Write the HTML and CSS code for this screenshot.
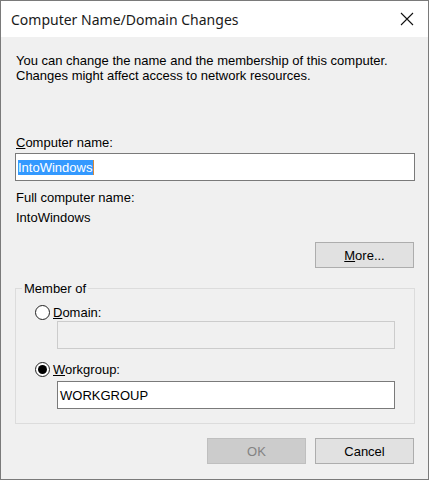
FILE: index.html
```html
<!DOCTYPE html>
<html>
<head>
  <meta charset="utf-8">
  <title>Computer Name/Domain Changes</title>
  <link rel="stylesheet" href="styles.css">
</head>
<body>
  <div class="window">
    <div class="titlebar">
      <span class="title">Computer Name/Domain Changes</span>
      <svg class="close" width="14" height="14" viewBox="0 0 14 14">
        <path d="M1 1 L13 13 M13 1 L1 13" stroke="#111" stroke-width="1.1" fill="none"/>
      </svg>
    </div>

    <div class="content">
      <p class="intro">You can change the name and the membership of this computer.<br>Changes might affect access to network resources.</p>

      <div class="label name-label"><u>C</u>omputer name:</div>
      <div class="textbox"><span class="sel">IntoWindows</span></div>

      <div class="label full-label">Full computer name:</div>
      <div class="label">IntoWindows</div>

      <div class="more-row">
        <button class="btn"><u>M</u>ore...</button>
      </div>

      <fieldset class="group">
        <legend>Member of</legend>
        <label class="radio-row domain">
          <input type="radio" name="member">
          <span><u>D</u>omain:</span>
        </label>
        <div class="textbox sub disabled"></div>
        <label class="radio-row workgroup">
          <input type="radio" name="member" checked>
          <span><u>W</u>orkgroup:</span>
        </label>
        <div class="textbox sub wg-box">WORKGROUP</div>
      </fieldset>

      <div class="actions">
        <button class="btn" disabled>OK</button>
        <button class="btn">Cancel</button>
      </div>
    </div>
  </div>
</body>
</html>
```

FILE: styles.css
```css
body {
  margin: 0;
  padding: 0;
  font-family: "Liberation Sans", Arial, sans-serif;
  font-size: 13px;
  color: #000;
  background: #fff;
}

.window {
  width: 429px;
  height: 480px;
  box-sizing: border-box;
  border: 1px solid #7a7a7a;
  background-color: #f0f0f0;
}

.titlebar {
  height: 36px;
  background-color: #fff;
  display: flex;
  align-items: center;
  justify-content: space-between;
  padding: 0 14px 0 10px;
}

.title {
  font-family: "Noto Sans", sans-serif;
  font-size: 14px;
  color: #1a1a1a;
}

.close {
  display: block;
}

.content {
  padding: 0 13px 0 14px;
}

.intro {
  margin: 16px 0 0 1px;
  line-height: 15px;
}

.label {
  line-height: 15px;
  margin-left: 1px;
}

.name-label {
  margin-top: 52px;
}

.full-label {
  margin-top: 9px;
  margin-bottom: 5px;
}

.textbox {
  height: 28px;
  box-sizing: border-box;
  border: 1px solid #7a7a7a;
  background-color: #fff;
  padding: 0 2px;
  display: flex;
  align-items: center;
}

.name-label + .textbox {
  margin-top: 3px;
}

.sel {
  background-color: #3399ff;
  color: #fff;
  line-height: 15px;
  padding-right: 1px;
  border-right: 1px solid #d68a3a;
}

.more-row {
  display: flex;
  justify-content: flex-end;
  margin-top: 17px;
  padding-right: 1px;
}

.btn {
  width: 99px;
  height: 26px;
  box-sizing: border-box;
  border: 1px solid #adadad;
  background-color: #e1e1e1;
  font-family: inherit;
  font-size: 13px;
  color: #000;
  padding: 0;
}

.btn:disabled {
  background-color: #cccccc;
  border-color: #bfbfbf;
  color: #838383;
}

.group {
  margin: 13px 0 0 0;
  padding: 0 19px 14px 19px;
  border: 1px solid #dcdcdc;
}

.group legend {
  padding: 0 2px;
  margin-left: -13px;
  line-height: 15px;
}

.radio-row {
  display: flex;
  align-items: center;
  height: 16px;
}

.radio-row input {
  appearance: none;
  -webkit-appearance: none;
  width: 15px;
  height: 15px;
  margin: 0 3px 0 0;
  border: 1px solid #222;
  border-radius: 50%;
  background: #fff;
  box-sizing: border-box;
  display: grid;
  place-content: center;
}

.radio-row input:checked::before {
  content: "";
  width: 9px;
  height: 9px;
  border-radius: 50%;
  background: #000;
}

.domain {
  margin-top: 8px;
}

.workgroup {
  margin-top: 12px;
}

.textbox.sub {
  margin: 1px 0 0 22px;
}

.textbox.wg-box {
  margin-top: 4px;
}

.textbox.disabled {
  background-color: #f0f0f0;
  border-color: #cccccc;
}

.actions {
  display: flex;
  justify-content: flex-end;
  gap: 9px;
  margin-top: 14px;
  padding-right: 1px;
}
```
